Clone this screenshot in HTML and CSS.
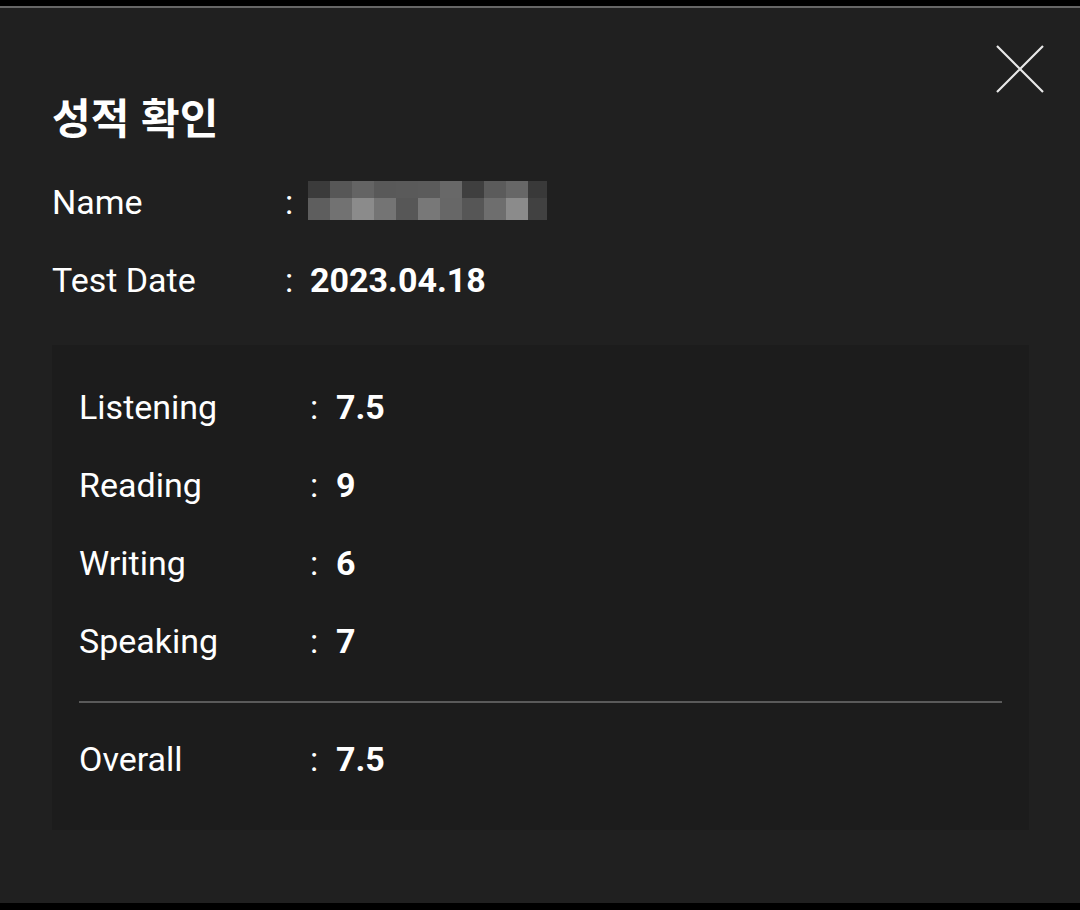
FILE: index.html
```html
<html lang="ko">

<head>
	<meta charset="UTF-8" />
	<meta name="viewport" content="width=device-width, initial-scale=1.0" />
	<title>성적 확인</title>
	<link rel="stylesheet" href="styles.css">
</head>

<body>
	<main class="score-sheet">
		<button class="score-sheet__close" type="button" aria-label="닫기">
			<svg width="48" height="48" viewBox="0 0 48 48">
				<path d="M1 1 L47 47 M47 1 L1 47" stroke="#e8e8e8" stroke-width="2.2" fill="none" />
			</svg>
		</button>
		<h2 class="score-sheet__title">성적 확인</h2>

		<section class="info-list">
			<div class="info-row">
				<span class="info-row__label">Name</span>
				<span class="info-row__colon">:</span>
				<span class="name-mosaic">
					<i style="background:#3b3b3b"></i><i style="background:#575757"></i><i style="background:#646464"></i><i style="background:#595959"></i><i style="background:#5a5a5a"></i><i style="background:#5b5b5b"></i><i style="background:#686868"></i><i style="background:#3f3f3f"></i><i style="background:#5b5b5b"></i><i style="background:#676767"></i><i style="background:#393939"></i>
					<i style="background:#5e5e5e"></i><i style="background:#727272"></i><i style="background:#8b8b8b"></i><i style="background:#747474"></i><i style="background:#575757"></i><i style="background:#787878"></i><i style="background:#676767"></i><i style="background:#565656"></i><i style="background:#6e6e6e"></i><i style="background:#8b8b8b"></i><i style="background:#414141"></i>
				</span>
			</div>
			<div class="info-row">
				<span class="info-row__label">Test Date</span>
				<span class="info-row__colon">:</span>
				<span class="info-row__value">2023.04.18</span>
			</div>
		</section>

		<section class="score-box">
			<div class="info-row info-row--score">
				<span class="info-row__label">Listening</span>
				<span class="info-row__colon">:</span>
				<span class="info-row__value">7.5</span>
			</div>
			<div class="info-row info-row--score">
				<span class="info-row__label">Reading</span>
				<span class="info-row__colon">:</span>
				<span class="info-row__value">9</span>
			</div>
			<div class="info-row info-row--score">
				<span class="info-row__label">Writing</span>
				<span class="info-row__colon">:</span>
				<span class="info-row__value">6</span>
			</div>
			<div class="info-row info-row--score">
				<span class="info-row__label">Speaking</span>
				<span class="info-row__colon">:</span>
				<span class="info-row__value">7</span>
			</div>
			<hr class="score-box__divider">
			<div class="info-row info-row--score">
				<span class="info-row__label">Overall</span>
				<span class="info-row__colon">:</span>
				<span class="info-row__value">7.5</span>
			</div>
		</section>
	</main>
</body>

</html>
```

FILE: styles.css
```css
:root{
  --panel: #202020;
  --box: #1c1c1c;
  --text: #ffffff;
}

*{
  box-sizing: border-box;
}

body{
  margin: 0;
  padding-top: 6px;
  background-color: #000;
  font-family: Roboto, "Noto Sans CJK KR", sans-serif;
  color: var(--text);
}

.score-sheet{
  position: relative;
  height: 897px;
  padding: 83px 51px 0 52px;
  background-color: var(--panel);
  border-top: 2px solid #666;
}

.score-sheet__close{
  position: absolute;
  top: 37px;
  right: 36px;
  width: 48px;
  height: 48px;
  padding: 0;
  border: none;
  background: none;
}

.score-sheet__close svg{
  display: block;
}

.score-sheet__title{
  margin: 0 0 22px 0;
  font-family: "Noto Sans CJK KR", sans-serif;
  font-size: 42px;
  font-weight: 700;
  line-height: 50px;
}

.info-row{
  display: grid;
  grid-template-columns: 232px 26px auto;
  align-items: center;
  font-size: 34px;
  line-height: 78px;
}

.info-row--score{
  grid-template-columns: 230px 27px auto;
}

.info-row__colon{
  padding-left: 1px;
}

.info-row__value{
  font-weight: 700;
}

.name-mosaic{
  display: grid;
  grid-template-columns: repeat(10, 22px) 19px;
  grid-template-rows: 17px 22px;
  width: 239px;
  margin: -3px 0 0 -2px;
}

.name-mosaic i{
  display: block;
}

.score-box{
  margin-top: 26px;
  height: 485px;
  padding: 23px 27px 0 27px;
  background-color: var(--box);
}

.score-box__divider{
  margin: 21px 0 17px 0;
  height: 2px;
  border: none;
  background-color: #5a5a5a;
}
```
